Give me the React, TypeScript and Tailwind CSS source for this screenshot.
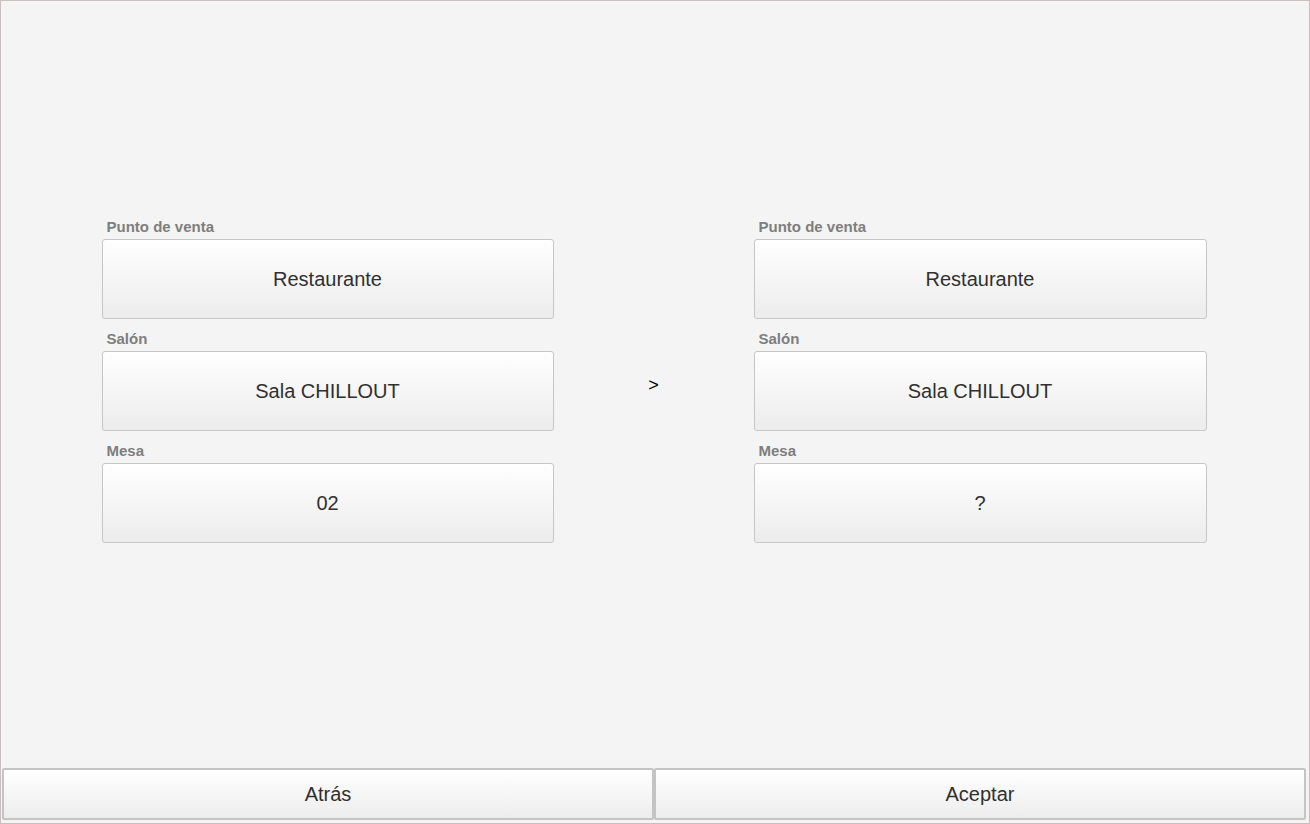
export default function App() {
  const izquierda = [
    { etiqueta: 'Punto de venta', valor: 'Restaurante' },
    { etiqueta: 'Salón', valor: 'Sala CHILLOUT' },
    { etiqueta: 'Mesa', valor: '02' },
  ];
  const derecha = [
    { etiqueta: 'Punto de venta', valor: 'Restaurante' },
    { etiqueta: 'Salón', valor: 'Sala CHILLOUT' },
    { etiqueta: 'Mesa', valor: '?' },
  ];

  const boton =
    'w-full h-[80px] rounded-[3px] border border-[#c6c6c6] bg-gradient-to-b from-[#ffffff] to-[#ececec] text-[20px] text-[#303030] flex items-center justify-center';

  const columna = (items: { etiqueta: string; valor: string }[]) => (
    <div className="flex flex-col">
      {items.map((it, i) => (
        <div key={i} className="flex flex-col">
          <span className="h-[32px] pl-[5px] text-[15px] font-bold text-[#7e7e7e] leading-[17px] flex items-end pb-[4px]">
            {it.etiqueta}
          </span>
          <div className={boton}>{it.valor}</div>
        </div>
      ))}
    </div>
  );

  return (
    <div
      className="w-[1310px] h-[824px] border border-[#c9bfbf] bg-[#f4f4f4] flex flex-col"
      style={{ fontFamily: '"Liberation Sans", Arial, sans-serif' }}
    >
      <div className="flex-1 flex items-center justify-center">
        <div className="grid grid-cols-[452px_200px_453px] items-center mt-[-19px] ml-[-2px]">
          {columna(izquierda)}
          <div className="flex justify-center pt-[21px] text-[18px] text-black">&gt;</div>
          {columna(derecha)}
        </div>
      </div>
      <div className="flex h-[52px] pl-[1px] pr-[3px] mb-[3px]">
        <button className="flex-1 border-2 border-[#c4c4c4] rounded-[2px] bg-gradient-to-b from-[#ffffff] to-[#ededed] text-[20px] text-[#303030]">
          Atrás
        </button>
        <button className="flex-1 border-2 border-[#c4c4c4] rounded-[2px] bg-gradient-to-b from-[#ffffff] to-[#ededed] text-[20px] text-[#303030]">
          Aceptar
        </button>
      </div>
    </div>
  );
}
